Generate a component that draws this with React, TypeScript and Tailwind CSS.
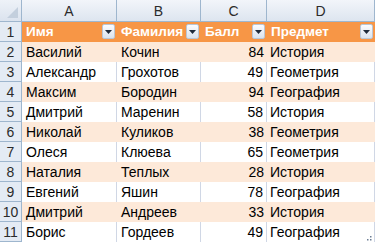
import React from 'react';

const rows = [
  ['Василий', 'Кочин', '84', 'История'],
  ['Александр', 'Грохотов', '49', 'Геометрия'],
  ['Максим', 'Бородин', '94', 'География'],
  ['Дмитрий', 'Маренин', '58', 'История'],
  ['Николай', 'Куликов', '38', 'Геометрия'],
  ['Олеся', 'Клюева', '65', 'Геометрия'],
  ['Наталия', 'Теплых', '28', 'История'],
  ['Евгений', 'Яшин', '78', 'География'],
  ['Дмитрий', 'Андреев', '33', 'История'],
  ['Борис', 'Гордеев', '49', 'География'],
];

const headers = ['Имя', 'Фамилия', 'Балл', 'Предмет'];

function FilterButton() {
  return (
    <span className="absolute right-[2px] top-[2px] flex h-[15px] w-[13px] items-center justify-center rounded-[2px] border border-[#b9c6d6] bg-gradient-to-b from-[#fbfcfe] to-[#dbe3ee]">
      <svg width="7" height="4" viewBox="0 0 7 4">
        <path d="M0 0h7L3.5 4z" fill="#1f2a3a" />
      </svg>
    </span>
  );
}

export default function App() {
  return (
    <div
      className="grid h-[242px] w-[375px] overflow-hidden bg-white text-[14px] leading-none text-black"
      style={{ fontFamily: '"Liberation Sans", Arial, sans-serif' }}
    >
      <div className="grid grid-cols-[22px_95px_84px_66px_108px] grid-rows-[22px_repeat(11,20px)]">
        {/* corner */}
        <div className="relative border-b border-r border-[#9eb6ce] bg-gradient-to-b from-[#eef2f8] to-[#dbe3ee]">
          <svg className="absolute bottom-[3px] right-[3px]" width="11" height="11" viewBox="0 0 11 11">
            <path d="M11 0v11H0z" fill="#c3cfdd" />
          </svg>
        </div>
        {['A', 'B', 'C', 'D'].map((c) => (
          <div
            key={c}
            className="flex items-center justify-center border-b border-r border-[#9eb6ce] bg-gradient-to-b from-[#f2f5fa] to-[#dde5ef] text-[14px] text-[#2b2b2b]"
          >
            {c}
          </div>
        ))}

        {/* row 1: table header */}
        <div className="flex items-center justify-center border-r border-b border-[#9eb6ce] bg-[#e4ebf4] text-[14px] text-[#2b2b2b]">
          1
        </div>
        {headers.map((h) => (
          <div key={h} className="relative flex items-center bg-[#f79646] pl-[4px] text-[13.5px] font-bold text-white">
            {h}
            <FilterButton />
          </div>
        ))}

        {rows.map((r, i) => {
          const band = i % 2 === 0;
          const cell = band
            ? 'bg-[#fde9d9]'
            : 'bg-white border-r border-[#d0d7e5]';
          return (
            <React.Fragment key={i}>
              <div className="flex items-center justify-center border-r border-b border-[#9eb6ce] bg-[#e4ebf4] text-[14px] text-[#2b2b2b]">
                {i + 2}
              </div>
              <div className={`flex items-center pl-[4px] ${cell}`}>{r[0]}</div>
              <div className={`flex items-center pl-[4px] ${cell}`}>{r[1]}</div>
              <div className={`flex items-center justify-end pr-[3px] ${cell}`}>{r[2]}</div>
              <div className={`relative flex items-center pl-[3px] ${cell}`}>
                {r[3]}
                {i === rows.length - 1 && (
                  <svg className="absolute bottom-[1px] right-[2px]" width="5" height="5" viewBox="0 0 5 5">
                    <rect x="3" y="0" width="1.5" height="1.5" fill="#6b7d93" />
                    <rect x="0" y="3" width="1.5" height="1.5" fill="#6b7d93" />
                    <rect x="3" y="3" width="1.5" height="1.5" fill="#6b7d93" />
                  </svg>
                )}
              </div>
            </React.Fragment>
          );
        })}
      </div>
    </div>
  );
}
